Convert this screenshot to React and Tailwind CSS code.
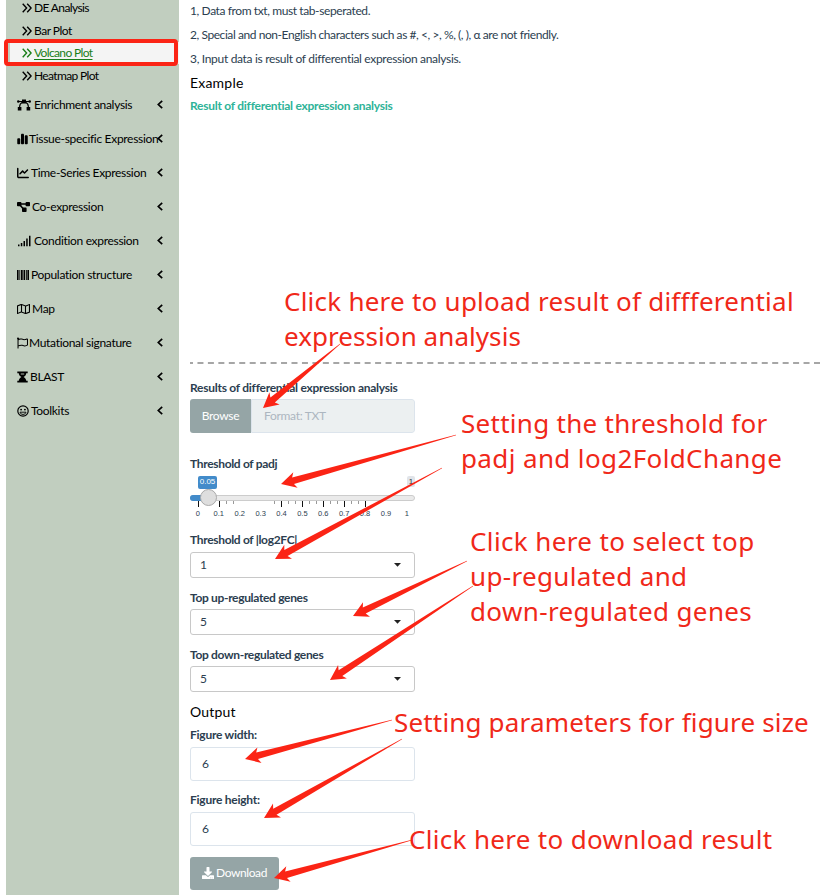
import { FaRegMap, FaRegFlag, FaDownload } from "react-icons/fa";
import { FaChartSimple, FaChartLine } from "react-icons/fa6";

const Glyph = ({ w, children }) => (
  <svg width={w} height="12" viewBox={`0 0 ${w} 12`} className="shrink-0" fill="currentColor">{children}</svg>
);

const Bezier = () => (
  <Glyph w={14}>
    <path d="M5 .5h4v4H5zM.8 8h3.6v3.5H.8zM9.6 8h3.6v3.5H9.6z" />
    <circle cx="1.3" cy="2.5" r="1.3" />
    <circle cx="12.7" cy="2.5" r="1.3" />
    <path d="M1.3 2.5H12.7M5.3 3.2C3.3 4.2 2.6 5.8 2.6 8M8.7 3.2c2 1 2.7 2.6 2.7 4.8" fill="none" stroke="currentColor" strokeWidth="1.1" />
  </Glyph>
);
const Nodes = () => (
  <Glyph w={13}>
    <rect x="0" y="1" width="4.4" height="4.2" rx=".8" />
    <rect x="8.6" y="1" width="4.4" height="4.2" rx=".8" />
    <rect x="5" y="6.6" width="4.6" height="4.4" rx=".8" />
    <path d="M4 3h5M3.4 4.6L6 7.6" stroke="currentColor" strokeWidth="1.5" />
  </Glyph>
);
const Signal = () => (
  <Glyph w={14}>
    <path d="M1 9.4h1.5v1.9H1zM3.8 8h1.5v3.3H3.8zM6.5 6h1.5v5.3H6.5zM9.2 3.4h1.5v7.9H9.2zM12 .8h1.5v10.5H12z" />
  </Glyph>
);
const Bars = () => (
  <Glyph w={12}>
    <path d="M0 1h1.6v10H0zM2.4 1h.8v10h-.8zM4 1h1.7v10H4zM6.5 1h1.7v10H6.5zM9 1h.8v10H9zM10.4 1H12v10h-1.6z" />
  </Glyph>
);
const Hourglass = () => (
  <Glyph w={11}>
    <path d="M.3.4h10.4v1.8H.3zM.3 9.8h10.4v1.8H.3z" />
    <path d="M1.8 2c0 2 1 3 2.6 4-1.6 1-2.6 2-2.6 4h7.4c0-2-1-3-2.6-4 1.6-1 2.6-2 2.6-4z" />
    <path d="M3.8 3h3.4" stroke="#c1cebf" strokeWidth=".9" />
  </Glyph>
);
const Face = () => (
  <Glyph w={12}>
    <circle cx="6" cy="6" r="5.2" fill="none" stroke="currentColor" strokeWidth="1.2" />
    <circle cx="4.1" cy="4.6" r=".95" />
    <circle cx="7.9" cy="4.6" r=".95" />
    <path d="M3 7.2h6C8.6 8.7 7.5 9.4 6 9.4S3.4 8.7 3 7.2z" fill="none" stroke="currentColor" strokeWidth=".9" />
  </Glyph>
);
const Simple = () => <FaChartSimple className="h-[12px] w-[11px] shrink-0" />;
const Line = () => <FaChartLine className="h-[12px] w-[12px] shrink-0" />;
const MapIcon = () => <FaRegMap className="h-[12px] w-[13px] shrink-0" />;
const Flag = () => <FaRegFlag className="h-[12px] w-[11px] shrink-0" />;

const SUB = [
  { label: "DE Analysis", box: "h-[23px] -mt-[4px]", track: "tracking-[-0.62px]" },
  { label: "Bar Plot", box: "h-[23px]", track: "tracking-[-0.5px]" },
  { label: "Volcano Plot", box: "h-[22px] ml-[4px] bg-[#f4f4f4] !pl-[12px] text-[#1a7f1a]", track: "tracking-[-0.64px] underline underline-offset-2" },
  { label: "Heatmap Plot", box: "h-[24px]", track: "tracking-[-0.64px]" },
];

const MENU = [
  [Bezier, "Enrichment analysis", "ml-[3px]"],
  [Simple, "Tissue-specific Expression", "ml-[1px]"],
  [Line, "Time-Series Expression", "ml-[2px]"],
  [Nodes, "Co-expression", "ml-[2px]"],
  [Signal, "Condition expression", "ml-[3px]"],
  [Bars, "Population structure", "ml-[2px]"],
  [MapIcon, "Map", "ml-[2px]"],
  [Flag, "Mutational signature", "ml-[1px]"],
  [Hourglass, "BLAST", "ml-[2px]"],
  [Face, "Toolkits", "ml-[2px]"],
];

const TICKS = ["0", "0.1", "0.2", "0.3", "0.4", "0.5", "0.6", "0.7", "0.8", "0.9", "1"];

const NOTES = [
  { text: "Click here to upload result of diffferential", pos: "left-[284px] top-[284px] tracking-[0.24px]" },
  { text: "expression analysis", pos: "left-[284px] top-[319px] tracking-[0.06px]" },
  { text: "Setting the threshold for", pos: "left-[461px] top-[406px] tracking-[0.28px]" },
  { text: "padj and log2FoldChange", pos: "left-[461px] top-[441px] tracking-[0.38px]" },
  { text: "Click here to select top", pos: "left-[470px] top-[524px] tracking-[0.38px]" },
  { text: "up-regulated and", pos: "left-[470px] top-[559px] tracking-[0.33px]" },
  { text: "down-regulated genes", pos: "left-[470px] top-[594px] tracking-[0.36px]" },
  { text: "Setting parameters for figure size", pos: "left-[394px] top-[705px] tracking-[0.17px]" },
  { text: "Click here to download result", pos: "left-[409px] top-[822px] tracking-[0.32px]" },
];

// Tail point, then tip point of each arrow
const ARROWS = [
  [340, 344, 263, 408],
  [456, 435, 281, 484],
  [442, 468, 275, 559],
  [467, 561, 353, 616],
  [473, 586, 330, 680],
  [392, 720, 245, 759],
  [402, 739, 264, 818],
  [412, 840, 274, 878],
];

function arrowPoints([x1, y1, x2, y2]) {
  const len = Math.hypot(x2 - x1, y2 - y1);
  const ux = (x1 - x2) / len;
  const uy = (y1 - y2) / len;
  const at = (d, s) => `${(x2 + ux * d - uy * s).toFixed(1)},${(y2 + uy * d + ux * s).toFixed(1)}`;
  return [at(0, 0), at(15, 8), at(12.5, 3.4), at(len, 0.2), at(len, -0.2), at(12.5, -3.4), at(15, -8)].join(" ");
}

function Label({ children, track = "tracking-[-0.33px]" }) {
  return <div className={`h-[14px] text-[12px] leading-[14px] font-bold ${track}`}>{children}</div>;
}

function Select({ label, value, gap, between = "mt-[5px]" }) {
  return (
    <div className={gap}>
      <Label>{label}</Label>
      <div className={`flex h-[26px] w-[225px] items-center justify-between rounded-[3px] border border-[#c8c8c8] pl-[9px] pr-[13px] text-[12px] ${between}`}>
        <span>{value}</span>
        <svg width="7" height="4" className="-mt-[1px]"><path d="M0 0h7L3.5 3.7z" fill="#222" /></svg>
      </div>
    </div>
  );
}

function Field({ label, gap }) {
  return (
    <div className={gap}>
      <Label track="tracking-[-0.25px]">{label}</Label>
      <div className="mt-[5px] flex h-[34px] w-[225px] items-center rounded-[3px] border border-[#dce4ec] pl-[11px] text-[12px]">6</div>
    </div>
  );
}

function Slider() {
  return (
    <div className="relative mt-[5px] h-[46px] w-[225px] text-[8px] leading-none [font-family:'Liberation_Sans',sans-serif]">
      <div className="absolute left-[8px] top-0 flex h-[13px] w-[19px] items-center justify-center rounded-[2px] bg-[#428bca] pb-[2px] text-white">0.05</div>
      <div className="absolute right-0 top-0 flex h-[11px] w-[8px] items-center justify-center rounded-[2px] bg-[#e1e4e9] text-[#333]">1</div>
      <div className="absolute left-0 top-[19px] h-[6px] w-full rounded-[3px] border border-[#ccc] bg-[#eaeaea]" />
      <div className="absolute left-0 top-[19px] h-[6px] w-[18px] rounded-l-[3px] bg-[#428bca]" />
      <svg className="absolute left-0 top-[25px]" width="225" height="7">
        {[8.5, 29.5, 91.5, 112.5, 133.5, 154.5, 175.5].map((x) => <path key={x} d={`M${x} 0V6`} stroke="#111" />)}
        {[36.5, 43.5, 84.5, 98.5, 105.5, 119.5, 126.5, 140.5, 147.5, 161.5, 168.5].map((x) => <path key={x} d={`M${x} 0V3`} stroke="#999" />)}
      </svg>
      <div className="absolute left-[10px] top-[13px] size-[17px] rounded-full border border-[#aaa] bg-[#dedede]" />
      <div className="absolute left-[-2.5px] top-[34px] flex">
        {TICKS.map((t) => <span key={t} className="w-[20.9px] text-center text-[7.5px] leading-[8px]">{t}</span>)}
      </div>
    </div>
  );
}

export default function App() {
  return (
    <div className="relative flex h-[895px] w-[822px] overflow-hidden bg-white text-[12px] text-[#2c3e50] [font-family:Lato,sans-serif]">
      <aside className="ml-[6px] h-full w-[173px] shrink-0 bg-[#c1cebf] text-black">
        <div className="flex h-[88px] flex-col">
          {SUB.map((s) => (
            <div key={s.label} className={`flex shrink-0 items-center pl-[16px] ${s.box}`}>
              <svg width="10" height="10" className="shrink-0" fill="none" stroke="currentColor" strokeWidth="1.4">
                <path d="M.7.8L4.6 5 .7 9.2M5.2.8L9.1 5 5.2 9.2" />
              </svg>
              <span className={`whitespace-pre pl-[2px] ${s.track}`}>{s.label}</span>
            </div>
          ))}
        </div>
        {MENU.map(([Icon, label, gap]) => (
          <div key={label} className="flex h-[34px] items-center pl-[11px] pr-[16px]">
            <Icon />
            <span className={`w-0 flex-1 whitespace-nowrap tracking-[-0.31px] ${gap}`}>{label}</span>
            <svg width="6" height="9" className="-mt-[2px] shrink-0" fill="none" stroke="currentColor" strokeWidth="1.7">
              <path d="M5.2.8L1.3 4.5 5.2 8.2" />
            </svg>
          </div>
        ))}
      </aside>

      <main className="ml-[11px] flex-1">
        <p className="h-[22px] leading-[22px] tracking-[-0.4px]">1, Data from txt, must tab-seperated.</p>
        <p className="mt-[2px] h-[22px] leading-[22px] tracking-[-0.43px]">2, Special and non-English characters such as #, &lt;, &gt;, %, (, ), α are not friendly.</p>
        <p className="mt-[2px] h-[22px] leading-[22px] tracking-[-0.32px]">3, Input data is result of differential expression analysis.</p>
        <h4 className="mt-[4px] h-[18px] text-[14px] leading-[18px] tracking-[0.2px] text-black">Example</h4>
        <a className="mt-[6px] block h-[16px] leading-[16px] font-bold tracking-[-0.26px] text-[#2eb398]">Result of differential expression analysis</a>
        <svg className="mt-[248px] block" width="632" height="2">
          <path d="M0 1H632" stroke="#a6a6a6" strokeWidth="2" strokeDasharray="6 4.45" strokeDashoffset="3" />
        </svg>

        <div className="mt-[17px]"><Label track="tracking-[-0.26px]">Results of differential expression analysis</Label></div>
        <div className="mt-[4px] flex h-[34px] w-[225px] overflow-hidden rounded-[3px] leading-[32px] tracking-[-0.3px]">
          <span className="w-[61px] bg-[#95a5a6] text-center leading-[34px] text-white">Browse</span>
          <span className="flex-1 rounded-r-[3px] border border-[#dce4ec] bg-[#ecf0f1] pl-[12px] text-[#acb6c0]">Format: TXT</span>
        </div>

        <div className="mt-[24px]"><Label>Threshold of padj</Label></div>
        <Slider />
        <Select label="Threshold of |log2FC|" value="1" gap="mt-[11px]" />
        <Select label="Top up-regulated genes" value="5" gap="mt-[13px]" between="mt-[4px]" />
        <Select label="Top down-regulated genes" value="5" gap="mt-[13px]" between="mt-[4px]" />
        <h4 className="mt-[11px] h-[18px] text-[14px] leading-[18px] tracking-[0.2px] text-black">Output</h4>
        <Field label="Figure width:" gap="mt-[7px]" />
        <Field label="Figure height:" gap="mt-[12px]" />
        <button className="mt-[11px] flex h-[33px] w-[89px] items-center justify-center gap-[2px] rounded-[3px] bg-[#95a5a6] pb-[1px] tracking-[-0.4px] text-white">
          <FaDownload className="size-[12px]" />
          Download
        </button>
      </main>

      <div className="absolute left-[4px] top-[39px] h-[27px] w-[174px] rounded-[4px] border-4 border-[#fb2415]" />
      {NOTES.map((n) => (
        <div key={n.text} className={`absolute whitespace-nowrap text-[26px] leading-[35px] text-[#f02819] [font-family:'Noto_Sans',sans-serif] ${n.pos}`}>{n.text}</div>
      ))}
      <svg className="absolute inset-0" width="822" height="895">
        {ARROWS.map((a) => <polygon key={a.join()} points={arrowPoints(a)} fill="#fb2415" />)}
      </svg>
    </div>
  );
}
